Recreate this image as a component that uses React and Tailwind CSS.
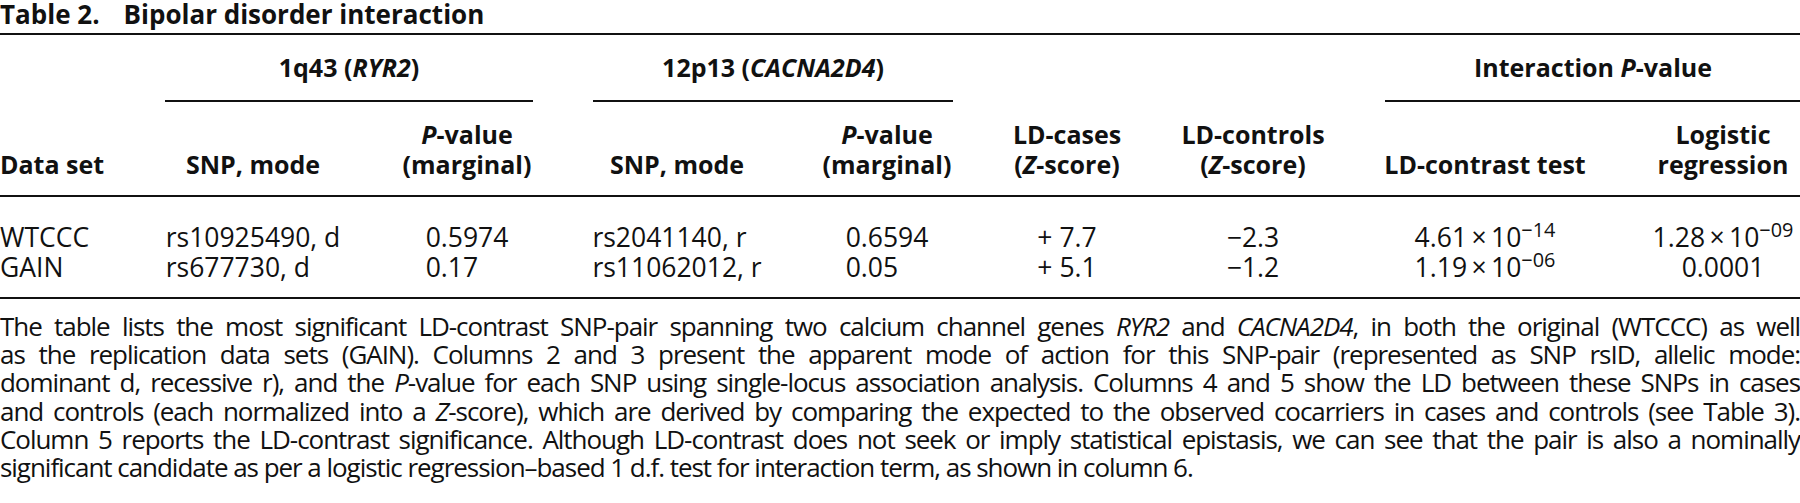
const grid = "grid grid-cols-[105px_176px_132px_168px_132px_108px_144px_200px_156px] gap-x-[60px]";

const Exp = ({ base, exp }) => (
    <span>
        {base}&#8201;×&#8201;10<sup>−{exp}</sup>
    </span>
);

const Head = ({ children }) => (
    <div className="h-[93px] flex flex-col justify-end items-center text-center pb-[16px] whitespace-nowrap">
        {children}
    </div>
);

const Cell = ({ lines, center }) => (
    <div className="flex justify-center">
        <div className={center ? "flex flex-col items-center whitespace-nowrap" : "flex flex-col items-start whitespace-nowrap"}>
            {lines.map((l, i) => (
                <div key={i}>{l}</div>
            ))}
        </div>
    </div>
);

const App = () => {
    return (
        <div className="w-[1800px] h-[503px] overflow-hidden bg-white text-[#111] font-['Open_Sans',sans-serif]">

            {/* title */}
            <div className="h-[33px] flex items-end pb-[4px] text-[26px] leading-[29px] font-bold whitespace-nowrap">
                <span>Table 2.</span>
                <span className="ml-[24px]">Bipolar disorder interaction</span>
            </div>

            {/* table head */}
            <div className={grid + " border-t-2 border-b-2 border-[#111] font-bold text-[25px] leading-[30px]"}>
                <div className="col-start-2 col-span-2 h-[67px] flex items-end justify-center pb-[18px] border-b-2 border-[#111] whitespace-nowrap">
                    <span>1q43 (<i>RYR2</i>)</span>
                </div>
                <div className="col-start-4 col-span-2 h-[67px] flex items-end justify-center pb-[18px] border-b-2 border-[#111] whitespace-nowrap">
                    <span>12p13 (<i>CACNA2D4</i>)</span>
                </div>
                <div className="col-start-8 col-span-2 h-[67px] flex items-end justify-center pb-[18px] border-b-2 border-[#111] whitespace-nowrap">
                    <span>Interaction <i>P</i>-value</span>
                </div>

                <div className="col-start-1 h-[93px] flex items-end pb-[16px] whitespace-nowrap">Data set</div>
                <Head>SNP, mode</Head>
                <Head><span><i>P</i>-value</span><span>(marginal)</span></Head>
                <Head>SNP, mode</Head>
                <Head><span><i>P</i>-value</span><span>(marginal)</span></Head>
                <Head><span>LD-cases</span><span>(<i>Z</i>-score)</span></Head>
                <Head><span>LD-controls</span><span>(<i>Z</i>-score)</span></Head>
                <Head>LD-contrast test</Head>
                <Head><span>Logistic</span><span>regression</span></Head>
            </div>

            {/* table body */}
            <div className={grid + " pt-[25px] pb-[15px] border-b-2 border-[#111] text-[26.5px] leading-[30px]"}>
                <div className="flex flex-col whitespace-nowrap">
                    <div>WTCCC</div>
                    <div>GAIN</div>
                </div>
                <Cell lines={["rs10925490, d", "rs677730, d"]} />
                <Cell lines={["0.5974", "0.17"]} />
                <Cell lines={["rs2041140, r", "rs11062012, r"]} />
                <Cell lines={["0.6594", "0.05"]} />
                <Cell lines={["+ 7.7", "+ 5.1"]} />
                <Cell lines={["−2.3", "−1.2"]} />
                <Cell lines={[<Exp base="4.61" exp="14" />, <Exp base="1.19" exp="06" />]} />
                <Cell center lines={[<Exp base="1.28" exp="09" />, "0.0001"]} />
            </div>

            {/* caption */}
            <div className="mt-[13px] text-[26px] leading-[28.2px] tracking-[-0.04em]">
                <div className="text-justify [text-align-last:justify]">
                    The table lists the most significant LD-contrast SNP-pair spanning two calcium channel genes <i>RYR2</i> and <i>CACNA2D4</i>, in both the original (WTCCC) as well
                </div>
                <div className="text-justify [text-align-last:justify]">
                    as the replication data sets (GAIN). Columns 2 and 3 present the apparent mode of action for this SNP-pair (represented as SNP rsID, allelic mode:
                </div>
                <div className="text-justify [text-align-last:justify]">
                    dominant d, recessive r), and the <i>P</i>-value for each SNP using single-locus association analysis. Columns 4 and 5 show the LD between these SNPs in cases
                </div>
                <div className="text-justify [text-align-last:justify]">
                    and controls (each normalized into a <i>Z</i>-score), which are derived by comparing the expected to the observed cocarriers in cases and controls (see Table 3).
                </div>
                <div className="text-justify [text-align-last:justify]">
                    Column 5 reports the LD-contrast significance. Although LD-contrast does not seek or imply statistical epistasis, we can see that the pair is also a nominally
                </div>
                <div>
                    significant candidate as per a logistic regression–based 1 d.f. test for interaction term, as shown in column 6.
                </div>
            </div>
        </div>
    );
};

export default App;
